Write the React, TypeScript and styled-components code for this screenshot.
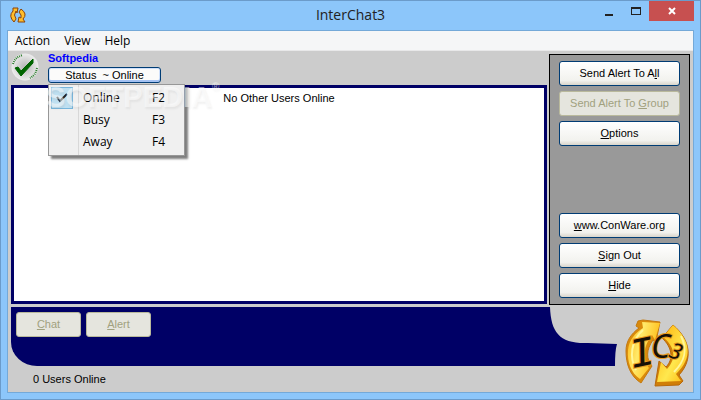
import React from "react";
import styled, { createGlobalStyle, css } from "styled-components";

const ui = `"Open Sans", "Noto Sans", sans-serif`;
const classic = `"Liberation Sans", Arial, sans-serif`;

const GlobalStyle = createGlobalStyle`
  * { box-sizing: border-box; }
  body { margin: 0; font: 11px/13px ${classic}; color: #000; }
  button { font: inherit; cursor: default; }
`;

const Window = styled.div`
  display: flex;
  flex-direction: column;
  min-height: 100vh;
  padding: 0 6px 6px;
  background: #8cc6fa;
  border: 1px solid #6b9bca;
`;

const TitleBar = styled.header`
  display: grid;
  grid-template-columns: 1fr auto 1fr;
  height: 29px;
`;

const AppIcon = styled.svg`
  width: 18px;
  height: 18px;
  margin: 5px 0 0 2px;
`;

const Title = styled.h1`
  margin: 0;
  font: 400 14px/28px ${ui};
  color: #222;
`;

const WindowControls = styled.div`
  display: flex;
  justify-content: flex-end;
`;

const ControlButton = styled.button<{ $close?: boolean }>`
  display: flex;
  align-items: center;
  justify-content: center;
  width: ${(p) => (p.$close ? 45 : 27)}px;
  height: 20px;
  padding: 0;
  border: 0;
  background: ${(p) => (p.$close ? "#c75050" : "transparent")};
`;

const Client = styled.main`
  display: flex;
  flex: 1;
  flex-direction: column;
  background: #ccc;
  border: 1px solid #74a9d8;
`;

const MenuBar = styled.nav`
  display: flex;
  height: 20px;
  background: #f5f6f7;
  border-bottom: 1px solid #e8e8e9;
`;

const MenuBarItem = styled.button`
  padding: 0 7px;
  border: 0;
  background: none;
  font: 12px/19px ${ui};
`;

const Workspace = styled.div`
  display: flex;
  flex: 1;
  gap: 2px;
  padding: 0 3px;
`;

const MainColumn = styled.section`
  display: flex;
  flex: 1;
  flex-direction: column;
  padding-bottom: 1px;
`;

const UserHeader = styled.div`
  display: flex;
  gap: 9px;
  height: 34px;
`;

const StatusBadge = styled.svg`
  width: 28px;
  height: 28px;
  margin-top: 2px;
`;

const UserInfo = styled.div`
  position: relative;
  width: 113px;
`;

const UserName = styled.div`
  height: 16px;
  font-weight: 700;
  line-height: 15px;
  color: #00f;
`;

const StatusButton = styled.button`
  display: block;
  width: 100%;
  height: 16px;
  padding: 0;
  border: 1px solid #003c74;
  border-radius: 3px;
  background: #fbfbfa;
  box-shadow: inset 0 -2px #a4c2f3, inset 0 0 0 1px #cfe0fb;
  line-height: 14px;
  white-space: pre;
`;

const StatusMenu = styled.div`
  position: absolute;
  z-index: 1;
  top: 33px;
  left: 0;
  width: 137px;
  padding: 2px;
  background: linear-gradient(90deg, #f0f0f0 29px, #d8d8d8 29px, #d8d8d8 30px, #f0f0f0 30px);
  border: 1px solid #979797;
  box-shadow: 3px 3px 2px rgba(0, 0, 0, 0.5);
`;

const StatusMenuItem = styled.button`
  display: grid;
  grid-template-columns: 22px 1fr 30px;
  column-gap: 10px;
  align-items: center;
  width: 100%;
  height: 22px;
  padding: 0;
  border: 0;
  background: none;
  font: 12px/20px ${ui};
  text-align: left;
`;

const CheckCell = styled.span<{ $checked?: boolean }>`
  display: flex;
  align-items: center;
  justify-content: center;
  height: 22px;
  ${(p) =>
    p.$checked &&
    css`
      background: #bfe0f1;
      border: 1px solid #78b6dc;
    `}
`;

const Watermark = styled.div`
  position: absolute;
  z-index: 2;
  top: 31px;
  left: -2px;
  display: flex;
  font: 700 29px/30px ${classic};
  color: rgba(255, 255, 255, 0.5);
  text-shadow: 1px 2px 2px rgba(100, 100, 100, 0.09);
  pointer-events: none;
`;

const Registered = styled.span`
  font-size: 10px;
  line-height: 10px;
`;

const UserList = styled.div`
  flex: 1;
  padding: 4px;
  background: #fff;
  border: 3px solid #006;
  text-align: center;
`;

const SidePanel = styled.aside`
  display: flex;
  flex-direction: column;
  justify-content: space-between;
  width: 141px;
  margin-top: 3px;
  padding: 6px 9px;
  background: #999;
  border: 1px solid #000;
`;

const ButtonStack = styled.div`
  display: flex;
  flex-direction: column;
  gap: 5px;
`;

const ActionButton = styled.button<{ $compact?: boolean }>`
  width: ${(p) => (p.$compact ? "65px" : "100%")};
  height: 25px;
  padding: 0;
  border: 1px solid #003c74;
  border-radius: 3px;
  background: linear-gradient(#fff, #f2f2ee 80%, #d9d5cb);
  color: #000;
  &:disabled {
    background: #e5e5de;
    border-color: #b9b99c;
    color: #a1a17f;
  }
`;

const Footer = styled.footer`
  display: grid;
  grid-template-columns: 1fr 67px 76px;
  grid-template-rows: 59px auto;
  height: 85px;
  padding-left: 3px;
  margin-top: 2px;
`;

const Dock = styled.div`
  display: flex;
  gap: 5px;
  padding: 5px;
  background: #006;
  border-bottom-left-radius: 26px 24px;
`;

const DockTail = styled.svg`
  width: 67px;
  height: 59px;
`;

const Logo = styled.svg`
  grid-row: 1 / 3;
  grid-column: 3;
  width: 68px;
  height: 72px;
  margin: 9px 0 0 5px;
  overflow: visible;
`;

const StatusText = styled.div`
  grid-column: 1 / 3;
  padding: 7px 22px;
`;

const LogoArt = () => (
  <>
    <defs>
      <linearGradient id="goldLeft" x1="0" y1="0" x2="1" y2="0.4">
        <stop offset="0" stopColor="#ffb30b" />
        <stop offset="0.45" stopColor="#ffe96a" />
        <stop offset="1" stopColor="#ffba10" />
      </linearGradient>
      <linearGradient id="goldRight" x1="0" y1="0" x2="1" y2="1">
        <stop offset="0" stopColor="#ffac05" />
        <stop offset="0.6" stopColor="#ffe84e" />
        <stop offset="1" stopColor="#ffb30b" />
      </linearGradient>
    </defs>
    <g strokeLinejoin="round">
      <path fill="#d98a0c" stroke="#c47a10" d="M16 5 L21 4 L38 6 L34 26 L31 24 C24 34 24 43 30 50 L19 67 C8 60 4 48 4 35 C4 25 9 18 17 12 L14 10Z" />
      <path fill="url(#goldLeft)" d="M20 6 L38 7 L33 24 L30 19 C21 30 20 44 27 52 L18 63 C9 57 5 46 6 34 C7 24 13 17 21 12Z" />
      <path fill="#d07e08" stroke="#b8690a" d="M51 9 C69 24 71 44 57 59 L61 65 L57 69 L33 70 L37 45 L44 51 C52 43 50 31 40 22Z" />
      <path fill="url(#goldRight)" d="M51 9 C69 25 71 42 54 58 L59 65 L35 66 L39 46 L45 53 C55 42 53 31 41 21Z" />
      <path fill="none" stroke="#fff79a" strokeWidth="2" d="M21 14 C9 25 7 41 14 54 M59 20 C66 34 63 45 52 56" />
    </g>
    <g fill="#171006" stroke="#e99a20" strokeWidth="2" paintOrder="stroke">
      <text x="8" y="50" fontSize="42" fontFamily="Liberation Mono, monospace" fontStyle="italic" transform="rotate(-12 20 40)">I</text>
      <text x="29" y="42" fontSize="33" fontFamily="Noto Sans, sans-serif" fontStyle="italic">C</text>
      <text x="48" y="43" fontSize="22" fontFamily="Noto Sans, sans-serif" fontStyle="italic" transform="rotate(18 54 35)">3</text>
    </g>
  </>
);

const Underlined = ({ text, at }: { text: string; at: number }) => (
  <>
    {text.slice(0, at)}
    <u>{text[at]}</u>
    {text.slice(at + 1)}
  </>
);

const statuses = [
  { label: "Online", shortcut: "F2", checked: true },
  { label: "Busy", shortcut: "F3", checked: false },
  { label: "Away", shortcut: "F4", checked: false },
];

export default function App() {
  return (
    <>
      <GlobalStyle />
      <Window>
        <TitleBar>
          <AppIcon viewBox="0 0 18 18" aria-hidden="true">
            <g fill="#ffbd29" stroke="#8b4309" strokeLinejoin="round">
              <path d="M4 2 L9 2 L8 7 L7 5 Q4 9 7 13 L5 16 Q-1 10 4 5Z" />
              <path d="M12 3 Q19 8 14 13 L16 16 L9 16 L10 11 L12 12 Q13 9 10 6Z" />
            </g>
          </AppIcon>
          <Title>InterChat3</Title>
          <WindowControls>
            <ControlButton aria-label="Minimize">
              <svg width="8" height="10"><path d="M0 8h8v2H0z" fill="#222" /></svg>
            </ControlButton>
            <ControlButton aria-label="Maximize">
              <svg width="10" height="8"><path d="M0 0h10v8H0zM1 2v5h8V2z" fill="#222" fillRule="evenodd" /></svg>
            </ControlButton>
            <ControlButton $close aria-label="Close">
              <svg width="8" height="8"><path d="M1 1L7 7M7 1L1 7" stroke="#fff" strokeWidth="2" /></svg>
            </ControlButton>
          </WindowControls>
        </TitleBar>
        <Client>
          <MenuBar>
            {["Action", "View", "Help"].map((m) => <MenuBarItem key={m}>{m}</MenuBarItem>)}
          </MenuBar>
          <Workspace>
            <MainColumn>
              <UserHeader>
                <StatusBadge viewBox="0 0 28 28" role="img" aria-label="Online">
                  <defs>
                    <radialGradient id="disc">
                      <stop offset="0" stopColor="#b5b5b5" />
                      <stop offset="1" stopColor="#ededed" />
                    </radialGradient>
                  </defs>
                  <circle cx="14" cy="14" r="13.5" fill="url(#disc)" />
                  <path d="M2 11 Q4 4 12 2 M26 15 Q25 22 19 25" fill="none" stroke="#2c7d2d" strokeWidth="2" strokeDasharray="1 1" />
                  <path d="M4 15 L7 14 L10 18 L22 6 V10 L10 23Z" fill="#006400" stroke="#006400" />
                </StatusBadge>
                <UserInfo>
                  <UserName>Softpedia</UserName>
                  <StatusButton>{"Status  ~ Online"}</StatusButton>
                  <StatusMenu role="menu">
                    {statuses.map((s) => (
                      <StatusMenuItem key={s.label} role="menuitemradio" aria-checked={s.checked}>
                        <CheckCell $checked={s.checked}>
                          {s.checked && (
                            <svg width="12" height="10"><path d="M1 4L4 8L11 1" fill="none" stroke="#222" strokeWidth="2" /></svg>
                          )}
                        </CheckCell>
                        <span>{s.label}</span>
                        <span>{s.shortcut}</span>
                      </StatusMenuItem>
                    ))}
                  </StatusMenu>
                  <Watermark>SOFTPEDIA<Registered>®</Registered></Watermark>
                </UserInfo>
              </UserHeader>
              <UserList>No Other Users Online</UserList>
            </MainColumn>
            <SidePanel>
              <ButtonStack>
                <ActionButton><Underlined text="Send Alert To All" at={15} /></ActionButton>
                <ActionButton disabled><Underlined text="Send Alert To Group" at={14} /></ActionButton>
                <ActionButton><Underlined text="Options" at={0} /></ActionButton>
              </ButtonStack>
              <ButtonStack>
                <ActionButton><Underlined text="www.ConWare.org" at={0} /></ActionButton>
                <ActionButton><Underlined text="Sign Out" at={0} /></ActionButton>
                <ActionButton><Underlined text="Hide" at={0} /></ActionButton>
              </ButtonStack>
            </SidePanel>
          </Workspace>
          <Footer>
            <Dock>
              <ActionButton $compact disabled><Underlined text="Chat" at={0} /></ActionButton>
              <ActionButton $compact disabled><Underlined text="Alert" at={0} /></ActionButton>
            </Dock>
            <DockTail viewBox="0 0 67 59" aria-hidden="true">
              <path d="M0 0 C1 26 10 37 38 36 L67 37 Q65 43 65 59 L0 59Z" fill="#006" />
            </DockTail>
            <Logo viewBox="0 0 68 72" role="img" aria-label="IC3">
              <LogoArt />
            </Logo>
            <StatusText>0 Users Online</StatusText>
          </Footer>
        </Client>
      </Window>
    </>
  );
}
